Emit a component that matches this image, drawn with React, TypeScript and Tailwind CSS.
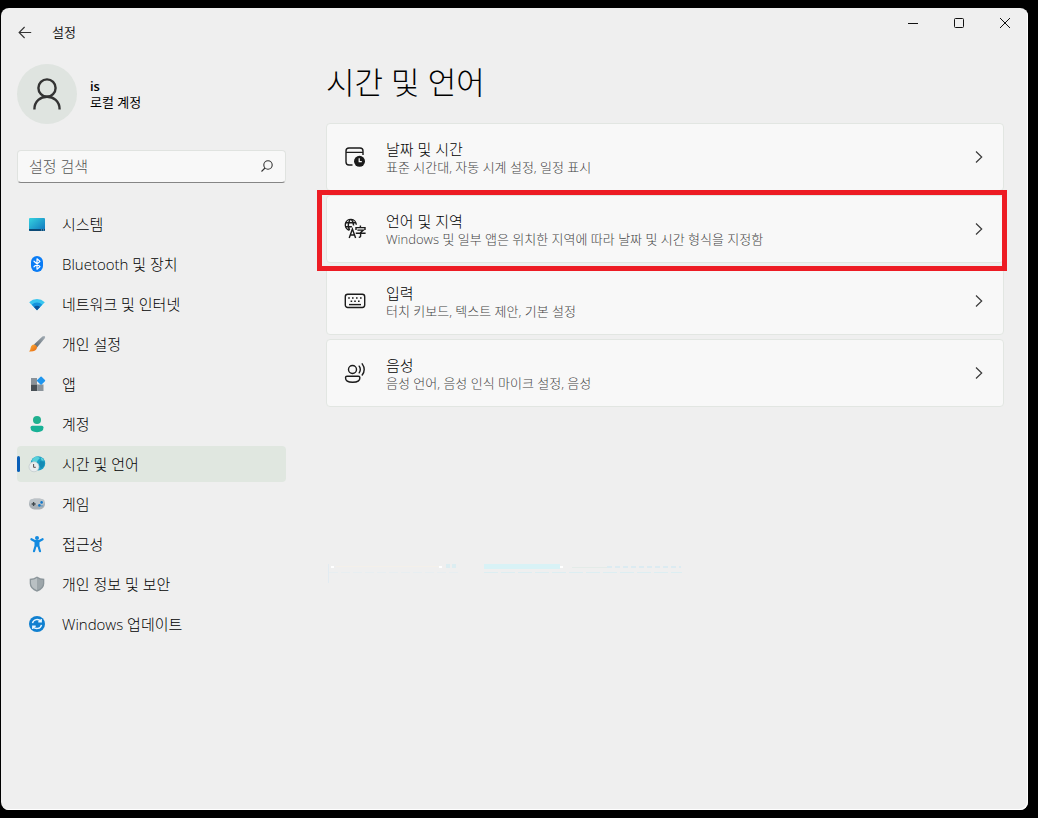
import type { ReactNode } from 'react';

type NavItem = {
	label: string;
	icon: ReactNode;
	active?: boolean;
};

type SettingItem = {
	title: string;
	description: string;
	icon: ReactNode;
	highlighted?: boolean;
};

/* Sidebar icons */
const SystemIcon = () => (
	<svg viewBox="0 0 18 18" className="size-[18px]">
		<defs>
			<linearGradient id="system" x1="0" y1="0" x2="1" y2="1">
				<stop offset="0" stopColor="#35d3e0" />
				<stop offset="1" stopColor="#0f73bd" />
			</linearGradient>
		</defs>
		<rect x="1" y="3" width="16" height="13" rx="1" fill="url(#system)" />
		<path d="M1 14h16v1a1 1 0 0 1-1 1H2a1 1 0 0 1-1-1z" fill="#0c4a77" />
		<path d="M13 15h1M15 15h1" stroke="#8fd2f2" strokeWidth="0.8" />
	</svg>
);

const BluetoothIcon = () => (
	<svg viewBox="0 0 18 18" className="size-[18px]">
		<rect x="3" y="1" width="12" height="16" rx="6" fill="#0a7cf5" />
		<path
			d="M6 6.2l6 5.4-3 2.6V3.8l3 2.6-6 5.4"
			fill="none"
			stroke="#fff"
			strokeWidth="1.2"
			strokeLinejoin="round"
			strokeLinecap="round"
		/>
	</svg>
);

const NetworkIcon = () => (
	<svg viewBox="0 0 18 18" className="size-[18px]">
		<path d="M9 15.2 1.2 7.2Q4.6 4 9 4t7.8 3.2z" fill="#39c5ef" />
		<path d="M9 15.2 3.8 9.8Q6 7.6 9 7.6t5.2 2.2z" fill="#1592dc" />
		<path d="M9 15.2 6 12.1Q7.2 10.8 9 10.8t3 1.3z" fill="#0d549b" />
	</svg>
);

const BrushIcon = () => (
	<svg viewBox="0 0 18 18" className="size-[18px]">
		<defs>
			<linearGradient id="handle" x1="1" y1="0" x2="0" y2="1">
				<stop offset="0" stopColor="#a6b0b8" />
				<stop offset="1" stopColor="#59646d" />
			</linearGradient>
			<linearGradient id="bristle" x1="0" y1="0" x2="1" y2="1">
				<stop offset="0" stopColor="#ffb43d" />
				<stop offset="1" stopColor="#e5640c" />
			</linearGradient>
		</defs>
		<path d="M6 9.6 14.4 1.6Q16.4.4 17 1.4 17.4 2.4 16.6 3.6L9 12.4z" fill="url(#handle)" />
		<path d="M6 9.5Q8.8 9.9 9.1 12.4 8.2 17 1 16.4 2.5 15.2 2.6 13 3.2 9.6 6 9.5z" fill="url(#bristle)" />
	</svg>
);

const AppsIcon = () => (
	<svg viewBox="0 0 18 18" className="size-[18px]">
		<path d="M3 3h6v6.5H3z" fill="#8a9299" />
		<path d="M3 9.5h6.3V16H3z" fill="#484f55" />
		<path d="M9.3 9.5h6.2V16H9.3z" fill="#8b949b" />
		<rect x="9.9" y="2.4" width="6.3" height="6.3" rx="0.8" fill="#1f96ee" transform="rotate(45 13 5.6)" />
	</svg>
);

const AccountIcon = () => (
	<svg viewBox="0 0 18 18" className="size-[18px]">
		<circle cx="9" cy="5" r="4" fill="#20b08f" />
		<path d="M2.5 12.6q0-1.8 1.8-1.8h9.4q1.8 0 1.8 1.8 0 4.6-6.5 4.6t-6.5-4.6z" fill="#18b196" />
	</svg>
);

const TimeIcon = () => (
	<svg viewBox="0 0 18 18" className="size-[18px]">
		<circle cx="10" cy="8.4" r="7.2" fill="#1b9fc4" />
		<path d="M4 5q1.4-3 5-3.7L12 3 9.6 5.6 8.6 8 5 7.6z" fill="#58d0da" />
		<path d="m12 6 4.5 1-.4 4-3 2.4L11 10z" fill="#148bb4" />
		<path d="m12.4 2.6 2.6 1.2.9 2-2.2-.4z" fill="#5fd4dc" />
		<circle cx="6" cy="11.8" r="5" fill="#e9edef" stroke="#b9c2c6" strokeWidth="0.6" />
		<path d="M5.6 9v3.3h2.2" fill="none" stroke="#5a4c4c" strokeWidth="1" />
	</svg>
);

const GameIcon = () => (
	<svg viewBox="0 0 18 18" className="size-[18px]">
		<rect x="1" y="3.6" width="16" height="10.8" rx="5.4" fill="#a9b0b6" />
		<rect x="1.4" y="4" width="15.2" height="6" rx="3" fill="#bcc3c8" />
		<path d="M3.6 9h4M5.6 7v4" stroke="#3f474d" strokeWidth="1.3" />
		<circle cx="13.6" cy="7.4" r="1.3" fill="#1277c9" />
		<circle cx="11.4" cy="10.4" r="1.3" fill="#1277c9" />
		<circle cx="14" cy="10.9" r="0.7" fill="#2e93dd" />
	</svg>
);

const AccessibilityIcon = () => (
	<svg viewBox="0 0 18 18" className="size-[18px]">
		<circle cx="9" cy="3" r="2" fill="#128ae0" />
		<path
			d="M3.4 4.2 7 6.2h4l3.6-2M9 6.6v4M7.6 6.6v4.2L6 16.2M10.4 6.6v4.2l1.6 5.4"
			fill="none"
			stroke="#128ae0"
			strokeWidth="2.2"
			strokeLinecap="round"
			strokeLinejoin="round"
		/>
	</svg>
);

const ShieldIcon = () => (
	<svg viewBox="0 0 18 18" className="size-[18px]">
		<path d="M9 1.4Q12.2 3.7 16.3 3.8v4.6Q16.3 14 9 16.8 1.7 14 1.7 8.4V3.8Q5.8 3.7 9 1.4z" fill="#8b959a" />
		<path d="M9 2.9v12.3Q3 12.7 3 8.3V5Q6.3 4.7 9 2.9z" fill="#b9c0c3" />
		<path d="M9 2.9v12.3q6-2.5 6-6.9V5Q11.7 4.7 9 2.9z" fill="#9da6aa" />
	</svg>
);

const UpdateIcon = () => (
	<svg viewBox="0 0 18 18" className="size-[18px]">
		<circle cx="9" cy="9" r="8" fill="#1080d0" />
		<path
			d="M4.5 8.2a4.7 4.7 0 0 1 8.4-1.8M13.2 3.9v2.9h-2.9M13.5 9.8a4.7 4.7 0 0 1-8.4 1.8M4.8 14.1v-2.9h2.9"
			fill="none"
			stroke="#e6f5ff"
			strokeWidth="1.4"
		/>
	</svg>
);

/* Card icons */
const CalendarClockIcon = () => (
	<svg viewBox="0 0 22 22" className="size-[22px]" fill="none" stroke="#1b1b1b" strokeWidth="1.4">
		<path d="M8.5 19H5q-3 0-3-3V5q0-3 3-3h11q3 0 3 3v4M2 6.4h17" />
		<circle cx="15.5" cy="15.3" r="5.5" fill="#1b1b1b" stroke="none" />
		<path d="M15.2 12.3v3.4h2.6" stroke="#fff" strokeWidth="1.2" />
	</svg>
);

const LanguageIcon = () => (
	<svg viewBox="0 0 22 22" className="size-[22px]" fill="none" stroke="#1b1b1b" strokeWidth="1.4">
		<path d="M5.4 12.2A5.5 5.5 0 1 1 12.3 6.8" />
		<path d="M5.6 12Q2.8 6.9 6.2 1.4M7.4 1.4Q9.6 3.6 9.6 7.6M1.6 4.8h10.4M1.3 8.8h6.6" />
		<path d="M5.2 20 8.4 11l3.2 9M6.3 17h4.3" />
		<path d="M16.4 7.6v1.8M12 12V9.6h9V12M13.4 12.1h6l-2.8 2.5V18q0 1.4-1.8 1.2M11.8 15.2h9.8" />
	</svg>
);

const KeyboardIcon = () => (
	<svg viewBox="0 0 22 22" className="size-[22px]" fill="none" stroke="#1b1b1b" strokeWidth="1.4">
		<rect x="1.3" y="4.3" width="19.4" height="13.2" rx="2.4" />
		<path d="M4.2 8h1.6M8 8h1.6M12 8h1.6M16 8h1.6M6.6 11.3h1.6M10.2 11.3h1.6M14 11.3h1.6" strokeWidth="1.6" />
		<path d="M5 14.6h12" />
	</svg>
);

const SpeechIcon = () => (
	<svg viewBox="0 0 22 22" className="size-[22px]" fill="none" stroke="#1b1b1b" strokeWidth="1.4" strokeLinecap="round">
		<circle cx="8.5" cy="7.5" r="4" />
		<path d="M3 14.3h11.4q1.5 0 1.5 1.5 0 4.5-7.2 4.5t-7.2-4.5q0-1.5 1.5-1.5z" />
		<path d="M15.2 4.2q2.2 3.3 0 6.6M18.2 1.8q4 5.6 0 11.2" />
	</svg>
);

const ChevronRight = () => (
	<svg viewBox="0 0 12 16" className="h-4 w-3" fill="none" stroke="#3a3a3a" strokeWidth="1.2">
		<path d="m3 2.5 5.7 5.5L3 13.5" />
	</svg>
);

const navItems: NavItem[] = [
	{ label: '시스템', icon: <SystemIcon /> },
	{ label: 'Bluetooth 및 장치', icon: <BluetoothIcon /> },
	{ label: '네트워크 및 인터넷', icon: <NetworkIcon /> },
	{ label: '개인 설정', icon: <BrushIcon /> },
	{ label: '앱', icon: <AppsIcon /> },
	{ label: '계정', icon: <AccountIcon /> },
	{ label: '시간 및 언어', icon: <TimeIcon />, active: true },
	{ label: '게임', icon: <GameIcon /> },
	{ label: '접근성', icon: <AccessibilityIcon /> },
	{ label: '개인 정보 및 보안', icon: <ShieldIcon /> },
	{ label: 'Windows 업데이트', icon: <UpdateIcon /> },
];

const settingItems: SettingItem[] = [
	{
		title: '날짜 및 시간',
		description: '표준 시간대, 자동 시계 설정, 일정 표시',
		icon: <CalendarClockIcon />,
	},
	{
		title: '언어 및 지역',
		description: 'Windows 및 일부 앱은 위치한 지역에 따라 날짜 및 시간 형식을 지정함',
		icon: <LanguageIcon />,
		highlighted: true,
	},
	{
		title: '입력',
		description: '터치 키보드, 텍스트 제안, 기본 설정',
		icon: <KeyboardIcon />,
	},
	{
		title: '음성',
		description: '음성 언어, 음성 인식 마이크 설정, 음성',
		icon: <SpeechIcon />,
	},
];

function TitleBar() {
	return (
		<header className="flex h-12 items-start justify-between">
			<div className="flex h-12 items-center pl-3">
				<button type="button" aria-label="뒤로" className="flex size-6 items-center justify-center">
					<svg viewBox="0 0 14 14" className="size-[14px]" fill="none" stroke="#333" strokeWidth="1.1">
						<path d="M13.2 7.5H1.2M6.6 2 1.1 7.5 6.6 13" />
					</svg>
				</button>
				<span className="ml-[15px] text-[13px] leading-4">설정</span>
			</div>
			<div className="flex">
				<button type="button" aria-label="최소화" className="flex h-[30px] w-[46px] items-center justify-center">
					<svg viewBox="0 0 10 10" className="size-[10px]" stroke="#111">
						<path d="M0 5.5h10" />
					</svg>
				</button>
				<button type="button" aria-label="최대화" className="flex h-[30px] w-[46px] items-center justify-center">
					<svg viewBox="0 0 10 10" className="size-[10px]" fill="none" stroke="#111">
						<rect x="0.5" y="0.5" width="9" height="9" rx="1" />
					</svg>
				</button>
				<button type="button" aria-label="닫기" className="flex h-[30px] w-[46px] items-center justify-center">
					<svg viewBox="0 0 10 10" className="size-[10px]" stroke="#111">
						<path d="m0 0 10 10M10 0 0 10" />
					</svg>
				</button>
			</div>
		</header>
	);
}

function Sidebar() {
	return (
		<aside className="w-[269px] shrink-0 pt-2">
			<div className="flex items-center gap-[13px]">
				<div className="flex size-[60px] items-center justify-center rounded-full bg-[#dfe4e0]">
					<svg viewBox="0 0 30 32" className="h-8 w-[30px]" fill="none" stroke="#333" strokeWidth="2.4">
						<circle cx="15" cy="10" r="8.6" />
						<path d="M2.4 31.4C2.4 14.6 27.6 14.6 27.6 31.4" />
					</svg>
				</div>
				<div className="text-[13px] leading-4">
					<p className="font-semibold text-black">is</p>
					<p className="text-black">로컬 계정</p>
				</div>
			</div>

			<div className="mt-[26px] flex h-[33px] items-center rounded border border-[#e0e3e0] border-b-[#858585] bg-[#f8f8f8] pr-3 pb-[2px] pl-[11px]">
				<input
					type="search"
					aria-label="설정 검색"
					placeholder="설정 검색"
					className="min-w-0 flex-1 bg-transparent text-[15px] leading-5 font-light outline-none placeholder:text-[#555]"
				/>
				<svg viewBox="0 0 12 12" className="size-3" fill="none" stroke="#333" strokeWidth="1.1">
					<circle cx="7" cy="5" r="4.2" />
					<path d="M4 8 .5 11.5" />
				</svg>
			</div>

			<nav className="mt-[23px]">
				<ul className="space-y-1">
					{navItems.map(({ label, icon, active }) => (
						<li key={label} className="relative">
							{active && <span className="absolute top-[10px] left-0 h-4 w-[3px] rounded-full bg-[#0a5fb8]" />}
							<a
								href="#"
								aria-current={active ? 'page' : undefined}
								className={`flex h-9 items-center gap-4 rounded pl-[11px] ${active ? 'bg-[#e0e7e0]' : ''}`}
							>
								{icon}
								<span className="pb-px text-[15px] leading-5 font-light text-black">{label}</span>
							</a>
						</li>
					))}
				</ul>
			</nav>
		</aside>
	);
}

function SettingCard({ title, description, icon, highlighted }: SettingItem) {
	return (
		<li className="relative">
			<button
				type="button"
				className="flex h-[68px] w-full items-center rounded border border-[#e2e6e2] bg-[#f8f8f8] pr-[18px] pl-[17px] text-left"
			>
				{icon}
				<span className="ml-5 flex-1 font-light">
					<span className="block text-[15px] leading-5 text-black">{title}</span>
					<span className="block text-[13px] leading-4 text-[#444]">{description}</span>
				</span>
				<ChevronRight />
			</button>
			{highlighted && (
				<div className="pointer-events-none absolute -top-[5px] -right-[3px] -bottom-2 -left-[9px] z-10 border-[5px] border-[#ed1c24]" />
			)}
		</li>
	);
}

function FaintLines() {
	return (
		<svg viewBox="0 0 356 24" className="mt-[152px] ml-[2px] h-6 w-[356px]" fill="none" aria-hidden="true">
			<path d="M.5 5v19" stroke="#e2ebf1" />
			<path d="M8 7.5h104" stroke="#f4f0ea" />
			<path d="M1 13.5h130" stroke="#e7eef1" strokeDasharray="9 3" />
			<path d="M3 8h3M111 8h3M232 8h3" stroke="#fff" strokeWidth="2" />
			<path d="M118 7h10" stroke="#dcedf1" strokeWidth="4" strokeDasharray="4 2" />
			<path d="M156 7.5h76" stroke="#d8f2f6" strokeWidth="5" />
			<path d="M156 13.5h198" stroke="#dceef2" strokeDasharray="14 3" />
			<path d="M244 8.5h35" stroke="#e3ebe8" />
			<path d="M279 8h74" stroke="#dcebf1" strokeWidth="2" strokeDasharray="5 3" />
		</svg>
	);
}

export default function App() {
	return (
		<div className="min-h-screen bg-black pt-2 pr-[10px] pb-2 pl-px font-['Open_Sans','Noto_Sans_CJK_KR',sans-serif] text-[#1b1b1b]">
			<div className="min-h-[calc(100vh-16px)] rounded-lg bg-[#efefef] shadow-[inset_-1px_-1px_0_#fff]">
				<TitleBar />
				<div className="flex gap-10 pr-6 pl-4">
					<Sidebar />
					<main className="min-w-0 flex-1 pt-[6px]">
						<h1 className="text-[31px] leading-10 font-light text-black">시간 및 언어</h1>
						<ul className="mt-[21px] space-y-1">
							{settingItems.map((item) => (
								<SettingCard key={item.title} {...item} />
							))}
						</ul>
						<FaintLines />
					</main>
				</div>
			</div>
		</div>
	);
}
